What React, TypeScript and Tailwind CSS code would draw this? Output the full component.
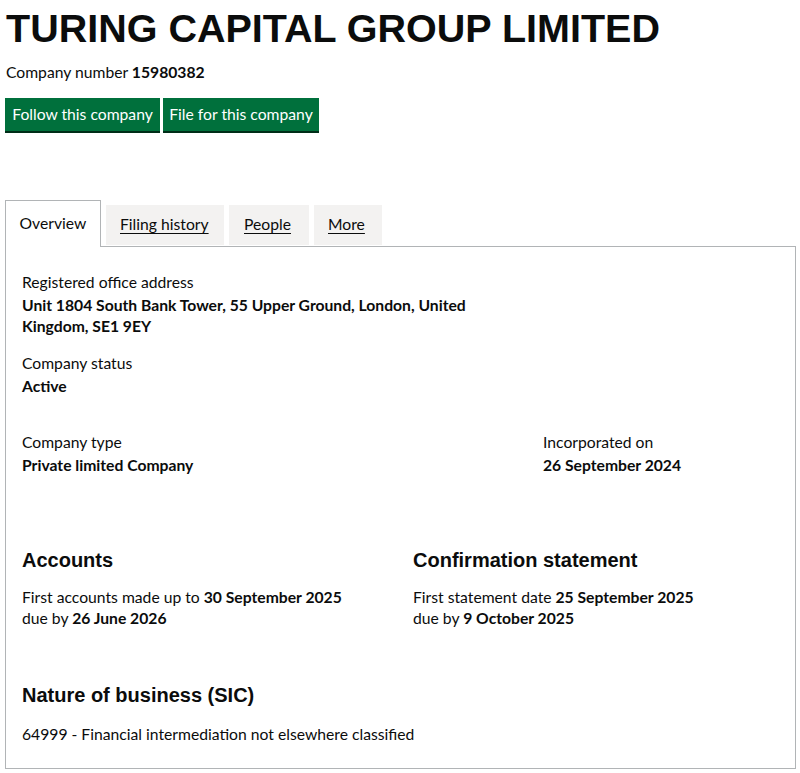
import React from "react";

const body = "font-['Lato',sans-serif]";
const heading = "font-['Liberation_Sans',Arial,sans-serif] font-bold text-[20px] leading-[25px]";

const Field = ({ label, value }: { label: string; value: React.ReactNode }) => (
	<div>
		<p className="text-[15.7px] leading-[24px] text-[#0b0c0c]">{label}</p>
		<p className="text-[15.7px] leading-[21px] font-bold text-[#0b0c0c] mt-[1px]">{value}</p>
	</div>
);

const App: React.FC = (): JSX.Element => {
	const tabs = ["Filing history", "People", "More"];
	return (
		<div className={`bg-white w-[800px] h-[773px] overflow-hidden text-[#0b0c0c] ${body}`}>
			<h1 className="font-['Liberation_Sans',Arial,sans-serif] font-bold text-[39.5px] leading-[46px] pt-[5px] pl-[6px] whitespace-nowrap">
				TURING CAPITAL GROUP LIMITED
			</h1>
			<p className="text-[15.7px] leading-[24px] pl-[6px] mt-[9px]">
				Company number <span className="font-bold">15980382</span>
			</p>
			{/* buttons */}
			<div className="flex gap-[3px] pl-[5px] mt-[14px]">
				<button className="bg-[#00703c] text-white text-[15.7px] h-[33px] whitespace-nowrap shadow-[0_2px_0_#002d18] w-[155px]">
					Follow this company
				</button>
				<button className="bg-[#00703c] text-white text-[15.7px] h-[33px] whitespace-nowrap shadow-[0_2px_0_#002d18] w-[156px]">
					File for this company
				</button>
			</div>
			{/* tabs */}
			<div className="flex items-end gap-[5px] pl-[5px] mt-[69px] relative z-10">
				<div className="h-[47px] w-[96px] bg-white border border-b-0 border-[#b1b4b6] flex items-center justify-center text-[15.7px] -mb-[1px] pb-[1px]">
					Overview
				</div>
				{tabs.map((t, i) => (
					<div
						key={t}
						className={`h-[40px] bg-[#f3f2f1] flex items-center text-[15.7px] underline underline-offset-[3px] decoration-1 mb-[1px] ${
							i === 0 ? "w-[118px] pl-[14px]" : i === 1 ? "w-[80px] pl-[15px]" : "w-[68px] pl-[14px]"
						}`}>
						{t}
					</div>
				))}
			</div>
			{/* panel */}
			<div className="ml-[5px] mr-[4px] border border-[#b1b4b6] h-[523px] px-[16px] pt-[23px]">
				<div className="max-w-[460px]">
					<Field
						label="Registered office address"
						value="Unit 1804 South Bank Tower, 55 Upper Ground, London, United Kingdom, SE1 9EY"
					/>
				</div>
				<div className="mt-[14px]">
					<Field label="Company status" value="Active" />
				</div>
				<div className="flex mt-[33px]">
					<div className="w-[521px]">
						<Field label="Company type" value="Private limited Company" />
					</div>
					<Field label="Incorporated on" value="26 September 2024" />
				</div>
				<div className="flex mt-[72px]">
					<div className="w-[391px]">
						<h2 className={heading}>Accounts</h2>
						<p className="text-[15.7px] leading-[21px] mt-[14px]">
							First accounts made up to <span className="font-bold">30 September 2025</span>
						</p>
						<p className="text-[15.7px] leading-[21px]">
							due by <span className="font-bold">26 June 2026</span>
						</p>
					</div>
					<div>
						<h2 className={heading}>Confirmation statement</h2>
						<p className="text-[15.7px] leading-[21px] mt-[14px]">
							First statement date <span className="font-bold">25 September 2025</span>
						</p>
						<p className="text-[15.7px] leading-[21px]">
							due by <span className="font-bold">9 October 2025</span>
						</p>
					</div>
				</div>
				<h2 className={`${heading} mt-[54px]`}>Nature of business (SIC)</h2>
				<p className="text-[15.7px] leading-[24px] mt-[14px]">
					64999 - Financial intermediation not elsewhere classified
				</p>
			</div>
		</div>
	);
};

export default App;
